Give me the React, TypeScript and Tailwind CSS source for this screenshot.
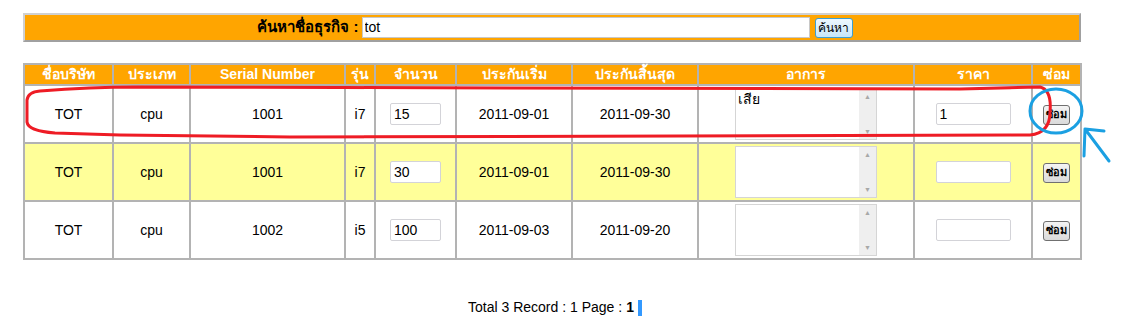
import React from "react";

const cols = [
  { label: "ชื่อบริษัท", w: "w-[89px]" },
  { label: "ประเภท", w: "w-[77px]" },
  { label: "Serial Number", w: "w-[155px]" },
  { label: "รุ่น", w: "w-[30px]" },
  { label: "จำนวน", w: "w-[81px]" },
  { label: "ประกันเริ่ม", w: "w-[116px]" },
  { label: "ประกันสิ้นสุด", w: "w-[126px]" },
  { label: "อาการ", w: "w-[216px]" },
  { label: "ราคา", w: "w-[118px]" },
  { label: "ซ่อม", w: "w-[49px]" },
];

const rows = [
  { company: "TOT", type: "cpu", serial: "1001", model: "i7", qty: "15", start: "2011-09-01", end: "2011-09-30", symptom: "เสีย", price: "1", bg: "bg-white" },
  { company: "TOT", type: "cpu", serial: "1001", model: "i7", qty: "30", start: "2011-09-01", end: "2011-09-30", symptom: "", price: "", bg: "bg-[#ffff99]" },
  { company: "TOT", type: "cpu", serial: "1002", model: "i5", qty: "100", start: "2011-09-03", end: "2011-09-20", symptom: "", price: "", bg: "bg-white" },
];

const cell = "border-2 border-[#b3b3b3] text-center align-middle";

function FakeTextarea({ value }: { value: string }) {
  return (
    <div className="mx-auto flex h-[52px] w-[142px] border border-[#d5d5d5] bg-white">
      <div className="flex-1 px-[2px] pt-[1px] text-left text-[14px] leading-[18px] text-black">
        {value}
      </div>
      <div className="flex w-[17px] flex-col items-center justify-between bg-[#efefef] py-[4px] text-[7px] leading-none text-[#a8a8a8]">
        <span>▲</span>
        <span>▼</span>
      </div>
    </div>
  );
}

function RepairButton() {
  return (
    <button className="h-[20px] w-[27px] rounded-[3px] border border-[#707070] bg-gradient-to-b from-[#f4f4f4] to-[#dadada] p-0 text-[11px] font-bold leading-none text-black">
      ซ่อม
    </button>
  );
}

export default function App() {
  return (
    <div className="relative h-[332px] w-[1123px] bg-white pt-[13px] font-['Tahoma','Liberation_Sans','Noto_Sans',sans-serif] text-[14px] text-black">
      <div className="ml-[23px] w-[1058px] border-2 border-t-[#d0d0d0] border-l-[#d0d0d0] border-r-[#a0a0a0] border-b-[#a0a0a0] bg-[#ffa500]">
        <div className="flex h-[25px] items-center justify-center gap-[3px] pl-[6px]">
          <span className="text-[15px] font-bold text-black">ค้นหาชื่อธุรกิจ :</span>
          <input
            readOnly
            value="tot"
            className="h-[21px] w-[448px] border border-[#c8c8c8] bg-white px-[2px] text-[14px] text-black outline-none"
          />
          <button className="ml-[2px] h-[20px] w-[38px] rounded-[3px] border border-[#3c9fd0] bg-gradient-to-b from-[#eef8fe] to-[#c6e6f8] p-0 text-[12px] leading-none text-black">
            ค้นหา
          </button>
        </div>
      </div>

      <table className="ml-[23px] mt-[21px] w-[1058px] table-fixed border-collapse">
        <thead>
          <tr className="h-[21px] bg-[#ffa500]">
            {cols.map((c) => (
              <th key={c.label} className={`${cell} ${c.w} p-0 text-[14px] font-bold leading-[17px] text-white`}>
                {c.label}
              </th>
            ))}
          </tr>
        </thead>
        <tbody>
          {rows.map((r, i) => (
            <tr key={i} className={`h-[58px] ${r.bg}`}>
              <td className={cell}>{r.company}</td>
              <td className={cell}>{r.type}</td>
              <td className={cell}>{r.serial}</td>
              <td className={cell}>{r.model}</td>
              <td className={cell}>
                <input
                  readOnly
                  value={r.qty}
                  className="h-[22px] w-[51px] rounded-[2px] border border-[#d3d3d8] bg-white px-[3px] text-[14px] text-black outline-none"
                />
              </td>
              <td className={cell}>{r.start}</td>
              <td className={cell}>{r.end}</td>
              <td className={cell}>
                <FakeTextarea value={r.symptom} />
              </td>
              <td className={cell}>
                <input
                  readOnly
                  value={r.price}
                  className="h-[22px] w-[75px] rounded-[2px] border border-[#d3d3d8] bg-white px-[3px] text-[14px] text-black outline-none"
                />
              </td>
              <td className={cell}>
                <RepairButton />
              </td>
            </tr>
          ))}
        </tbody>
      </table>

      <div className="ml-[23px] mt-[37px] flex w-[1064px] items-center justify-center font-['Liberation_Sans',Arial,sans-serif] text-[14px]">
        <span>Total 3 Record : 1 Page : </span>
        <span className="ml-[4px] font-bold">1</span>
        <span className="ml-[4px] inline-block h-[16px] w-[4px] bg-[#3399ff]" />
      </div>

      {/* hand-drawn annotations over the first row */}
      <svg className="pointer-events-none absolute left-0 top-0" width="1123" height="332" fill="none">
        <path
          d="M137 87 L960 89 L1040 87 Q1052 90 1050 112 Q1050 133 1030 135 L290 137 L120 135 L55 133 Q28 131 27 122 L27 100 Q28 92 40 91 Q90 87 137 87"
          stroke="#ee1c25"
          strokeWidth="3"
        />
        <ellipse cx="1056" cy="111" rx="26" ry="22" stroke="#1ba0e2" strokeWidth="3" />
        <path d="M1109 161 L1085 129 M1085 129 L1104 131 M1085 129 L1084 156" stroke="#1ba0e2" strokeWidth="3" strokeLinecap="round" />
      </svg>
    </div>
  );
}
